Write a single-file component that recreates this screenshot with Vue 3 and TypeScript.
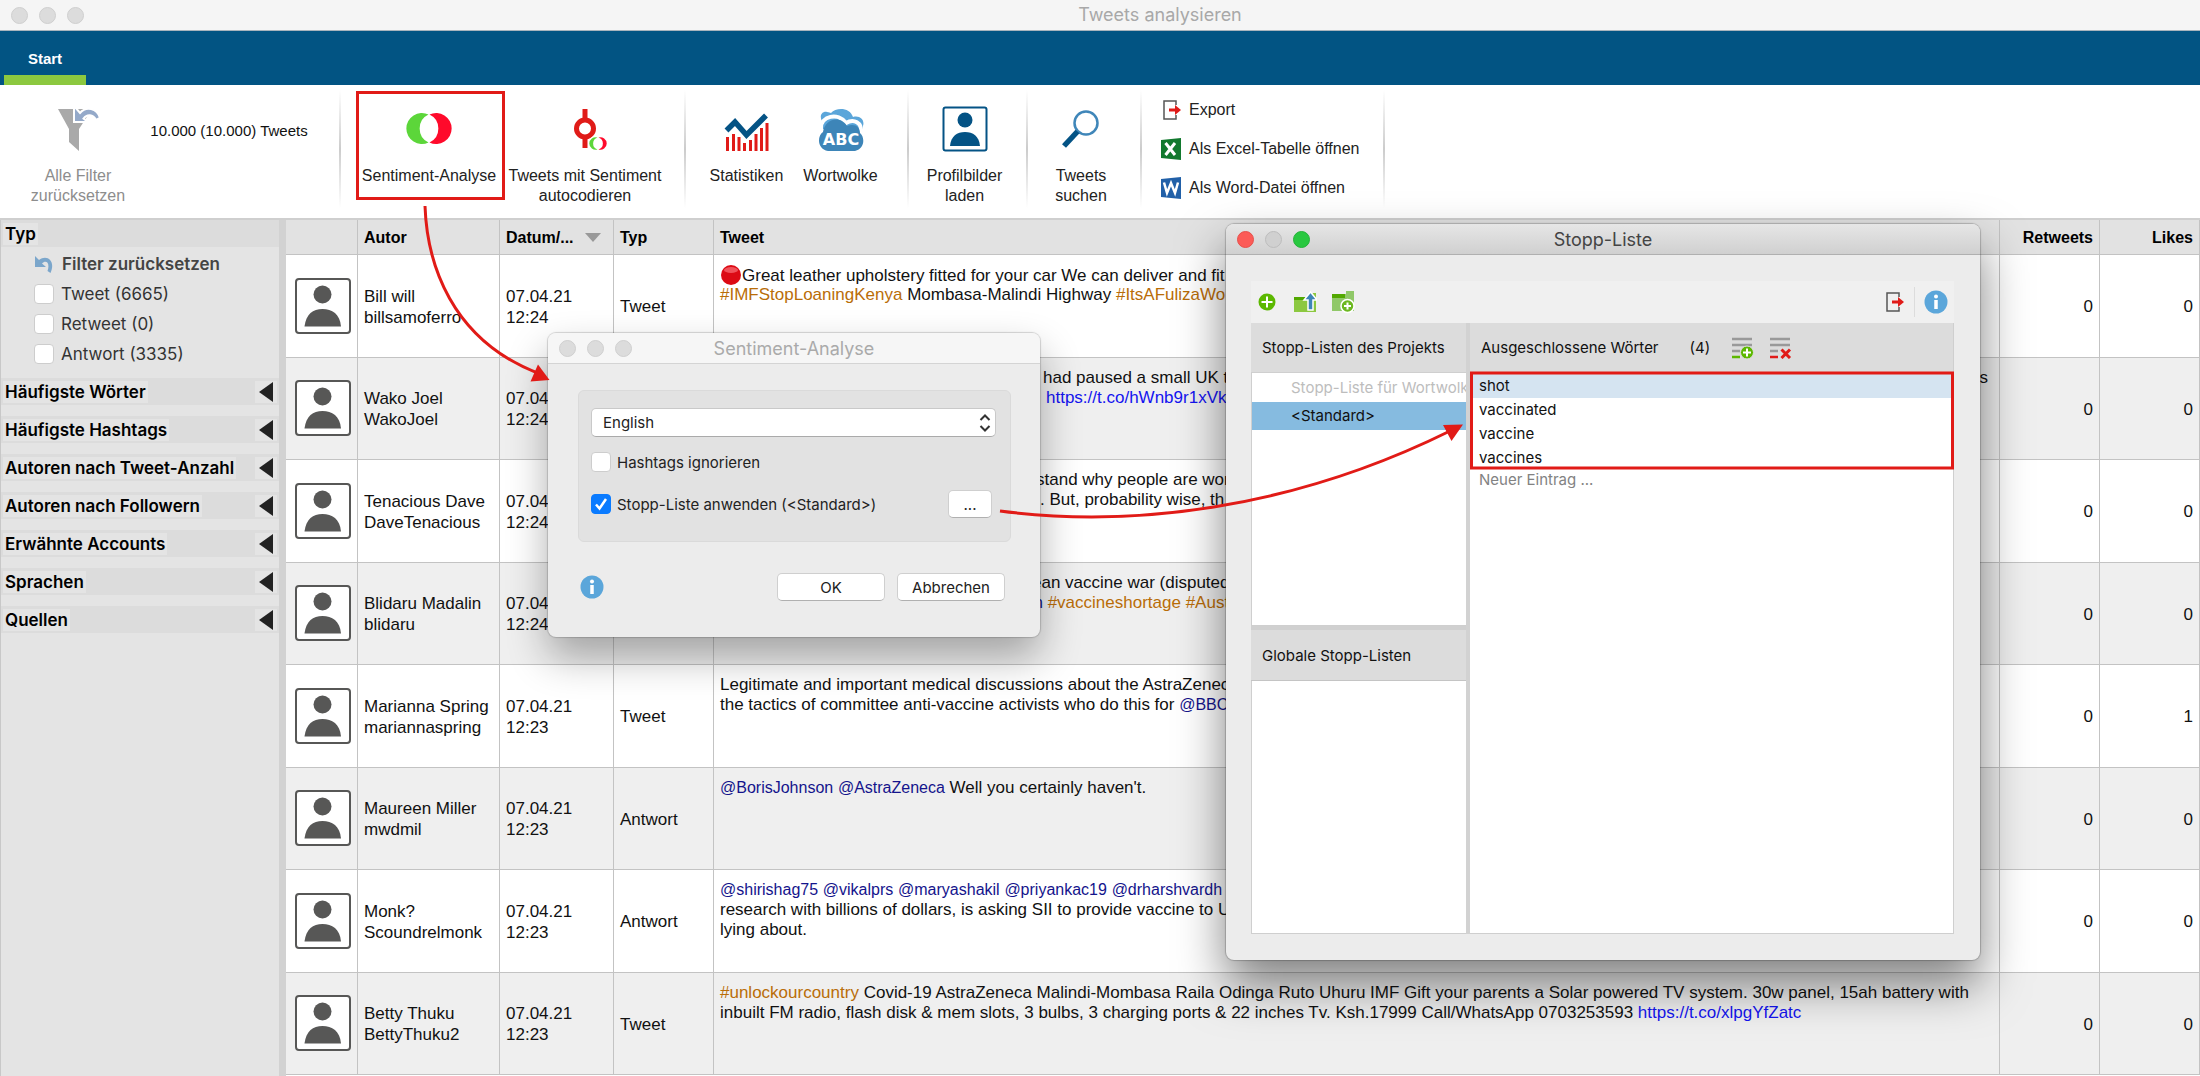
<script setup lang="ts">
import { ref } from 'vue'

type Kind = 'text' | 'hash' | 'mention' | 'link' | 'dot'
interface Part { kind: Kind; text: string }
interface Line { indent?: number; parts: Part[]; tail?: string }
interface Row { name: string; handle: string; time: string; type: string; lines: Line[]; retweets: number; likes: number }

const t = (text: string): Part => ({ kind: 'text', text })
const h = (text: string): Part => ({ kind: 'hash', text })
const m = (text: string): Part => ({ kind: 'mention', text })
const l = (text: string): Part => ({ kind: 'link', text })

const rows: Row[] = [
  { name: 'Bill will', handle: 'billsamoferro', time: '12:24', type: 'Tweet', retweets: 0, likes: 0, lines: [
    { parts: [{ kind: 'dot', text: '' }, t('Great leather upholstery fitted for your car We can deliver and fit a')] },
    { parts: [h('#IMFStopLoaningKenya'), t(' Mombasa-Malindi Highway '), h('#ItsAFulizaWor')] } ] },
  { name: 'Wako Joel', handle: 'WakoJoel', time: '12:24', type: 'Tweet', retweets: 0, likes: 0, lines: [
    { indent: 323, parts: [t('had paused a small UK t')], tail: 's' },
    { indent: 326, parts: [l('https://t.co/hWnb9r1xVk')] } ] },
  { name: 'Tenacious Dave', handle: 'DaveTenacious', time: '12:24', type: 'Tweet', retweets: 0, likes: 0, lines: [
    { indent: 316, parts: [t('stand why people are wor')] },
    { indent: 320, parts: [t('. But, probability wise, th')] } ] },
  { name: 'Blidaru Madalin', handle: 'blidaru', time: '12:24', type: 'Tweet', retweets: 0, likes: 0, lines: [
    { indent: 312, parts: [t('ean vaccine war (disputed')] },
    { indent: 314, parts: [m('n'), t(' '), h('#vaccineshortage'), t(' '), h('#Aust')] } ] },
  { name: 'Marianna Spring', handle: 'mariannaspring', time: '12:23', type: 'Tweet', retweets: 0, likes: 1, lines: [
    { parts: [t('Legitimate and important medical discussions about the AstraZenec')] },
    { parts: [t('the tactics of committee anti-vaccine activists who do this for '), m('@BBC')] } ] },
  { name: 'Maureen Miller', handle: 'mwdmil', time: '12:23', type: 'Antwort', retweets: 0, likes: 0, lines: [
    { parts: [m('@BorisJohnson'), t(' '), m('@AstraZeneca'), t(" Well you certainly haven't.")] } ] },
  { name: 'Monk?', handle: 'Scoundrelmonk', time: '12:23', type: 'Antwort', retweets: 0, likes: 0, lines: [
    { parts: [m('@shirishag75'), t(' '), m('@vikalprs'), t(' '), m('@maryashakil'), t(' '), m('@priyankac19'), t(' '), m('@drharshvardh')] },
    { parts: [t('research with billions of dollars, is asking SII to provide vaccine to U')] },
    { parts: [t('lying about.')] } ] },
  { name: 'Betty Thuku', handle: 'BettyThuku2', time: '12:23', type: 'Tweet', retweets: 0, likes: 0, lines: [
    { parts: [h('#unlockourcountry'), t(' Covid-19 AstraZeneca Malindi-Mombasa Raila Odinga Ruto Uhuru IMF Gift your parents a Solar powered TV system. 30w panel, 15ah battery with')] },
    { parts: [t('inbuilt FM radio, flash disk & mem slots, 3 bulbs, 3 charging ports & 22 inches Tv. Ksh.17999 Call/WhatsApp 0703253593 '), l('https://t.co/xlpgYfZatc')] } ] },
]

const typeFilters = ref([
  { label: 'Tweet (6665)', on: false },
  { label: 'Retweet (0)', on: false },
  { label: 'Antwort (3335)', on: false },
])
const sections = ['Häufigste Wörter', 'Häufigste Hashtags', 'Autoren nach Tweet-Anzahl', 'Autoren nach Followern', 'Erwähnte Accounts', 'Sprachen', 'Quellen']
const words = ['shot', 'vaccinated', 'vaccine', 'vaccines']
const selectedWord = ref('shot')
const language = ref('English')
const ignoreHashtags = ref(false)
const useStopList = ref(true)
const newWord = ref('')
</script>

<template>
  <div class="app">
    <header class="titlebar">
      <span class="lights"><i></i><i></i><i></i></span>
      <h1>Tweets analysieren</h1>
    </header>
    <nav class="tabs"><a href="#" class="tab">Start</a></nav>

    <div class="ribbon">
      <div class="group g-filter">
        <button class="tool dim">
          <svg width="46" height="46" viewBox="0 0 46 46"><path d="M3 3H37L24 23V45L14 36V23Z" fill="#a9a9a9"/><path d="M19 1V16H33L28.500 12.500C32 8 38 8 41 14L45 12C42 2 31 0 25 7L20 1Z" fill="#94a9c9" stroke="#fff" stroke-width="2"/></svg>
          <span>Alle Filter<br>zurücksetzen</span>
        </button>
        <span class="count">10.000 (10.000) Tweets</span>
      </div>
      <div class="group g-senti">
        <button class="tool w-a">
          <svg width="46" height="46" viewBox="0 0 46 46"><path d="M22.500 8.500A15.500 15.500 0 1 0 22.500 36.500A15.500 15.500 0 0 1 22.500 8.500Z" fill="#5cd63a"/><path d="M23.500 8.500A15.500 15.500 0 1 1 23.500 36.500A15.500 15.500 0 0 0 23.500 8.500Z" fill="#ff0a2b"/></svg>
          <span>Sentiment-Analyse</span>
        </button>
        <button class="tool w-b">
          <svg width="46" height="46" viewBox="0 0 46 46"><path d="M23 3V13M23 32V42" stroke="#e01b18" stroke-width="5"/><circle cx="23" cy="22.500" r="8.500" fill="none" stroke="#e01b18" stroke-width="5"/><circle cx="33.500" cy="37.500" r="7.500" fill="#fff"/><path d="M35.500 31.500A6.300 6.300 0 1 0 35.500 43.500A6.300 6.300 0 0 1 35.500 31.500Z" fill="#5cd63a"/><path d="M36.500 31.500A6.300 6.300 0 1 1 36.500 43.500A6.300 6.300 0 0 0 36.500 31.500Z" fill="#ff0a2b"/></svg>
          <span>Tweets mit Sentiment<br>autocodieren</span>
        </button>
      </div>
      <div class="group g-stat">
        <button class="tool w-c">
          <svg width="46" height="46" viewBox="0 0 46 46"><path d="M3.500 31V45M9.500 28V45M15 31V45M20.500 37V45M26.500 34V45M32 28V45M37.500 22V45M43 17V45" stroke="#e01b18" stroke-width="3"/><path d="M2 24L11 15L22 29L42 8" fill="none" stroke="#fff" stroke-width="9"/><path d="M2.500 24.500L11 16L22.500 29L42 9.500" fill="none" stroke="#045385" stroke-width="5.500"/></svg>
          <span>Statistiken</span>
        </button>
        <button class="tool w-c">
          <svg width="46" height="46" viewBox="0 0 46 46"><path d="M4 15C1 10 4 5 9 6C11 6 12 7 13 7C18 1 32 1 35 11C42 9 47 14 45 20V23H5V16Z" fill="#5ba6da"/><path d="M3 22C3 10 20 6 28 17C36 12 44 17 43 26" fill="none" stroke="#fff" stroke-width="4"/><path d="M5 26C7 13 22 9 29 20C37 17 42 21 42 27C47 31 47 43 37 45H10C-1 43 -1 30 5 26Z" fill="#3d85b8"/><text x="23" y="39" text-anchor="middle" class="abc">ABC</text></svg>
          <span>Wortwolke</span>
        </button>
      </div>
      <div class="group g-prof">
        <button class="tool w-d">
          <svg width="46" height="46" viewBox="0 0 46 46"><rect x="1.500" y="1.500" width="43" height="43" rx="2" fill="#fff" stroke="#045385" stroke-width="2"/><circle cx="23" cy="14" r="7.500" fill="#045385"/><path d="M8 40C9 30 15 26 23 26S37 30 38 40Z" fill="#045385"/></svg>
          <span>Profilbilder<br>laden</span>
        </button>
      </div>
      <div class="group g-find">
        <button class="tool w-d">
          <svg width="46" height="46" viewBox="0 0 46 46"><circle cx="28" cy="17" r="11.500" fill="none" stroke="#3f86b9" stroke-width="2.500"/><path d="M19.500 25.500L6 40" stroke="#045385" stroke-width="5.500"/></svg>
          <span>Tweets<br>suchen</span>
        </button>
      </div>
      <div class="group g-files">
        <button class="file"><svg width="20" height="22" viewBox="0 0 20 22"><path d="M15 6V2H3V20H15V16" fill="none" stroke="#555" stroke-width="1.500"/><path d="M8 11H15" stroke="#e01b18" stroke-width="3"/><path d="M14 6L20 11L14 16Z" fill="#e01b18"/></svg>Export</button>
        <button class="file"><svg width="20" height="22" viewBox="0 0 20 22"><path d="M0 2L20 0V22L0 20Z" fill="#12792e"/><path d="M4.500 5L14 17M14 5L4.500 17" stroke="#fff" stroke-width="3"/></svg>Als Excel-Tabelle öffnen</button>
        <button class="file"><svg width="20" height="22" viewBox="0 0 20 22"><path d="M0 2L20 0V22L0 20Z" fill="#2160a8"/><path d="M3 5.500L6 16L10 6L14 16L17 5.500" fill="none" stroke="#fff" stroke-width="2.500"/></svg>Als Word-Datei öffnen</button>
      </div>
    </div>

    <main class="body">
      <aside class="sidebar">
        <h2 class="sec first"><span>Typ</span></h2>
        <div class="filters">
          <button class="reset"><svg width="20" height="18" viewBox="0 0 20 18"><path d="M1 1V12H12L8 8.500C11.500 5 16.500 7 13.500 16L16.500 18C22 6 13 -1 5 5Z" fill="#7ba6cb"/></svg>Filter zurücksetzen</button>
          <label v-for="f in typeFilters" :key="f.label"><input v-model="f.on" type="checkbox" class="box">{{ f.label }}</label>
        </div>
        <h2 v-for="s in sections" :key="s" class="sec"><span>{{ s }}</span><button :aria-label="s"><svg width="14" height="20" viewBox="0 0 14 20"><path d="M14 0V20L0 10Z" fill="#222"/></svg></button></h2>
      </aside>

      <table class="grid">
        <colgroup><col class="c-pic"><col class="c-name"><col class="c-date"><col class="c-num"><col><col class="c-num"><col class="c-num"></colgroup>
        <thead>
          <tr><th></th><th>Autor</th><th><span class="sort">Datum/...<svg width="16" height="9" viewBox="0 0 16 9"><path d="M0 0H16L8 9Z" fill="#999"/></svg></span></th><th>Typ</th><th>Tweet</th><th class="num">Retweets</th><th class="num">Likes</th></tr>
        </thead>
        <tbody>
          <tr v-for="r in rows" :key="r.handle">
            <td class="pic"><svg width="56" height="56" viewBox="0 0 56 56"><rect x="1" y="1" width="54" height="54" rx="3" fill="#fff" stroke="#575756" stroke-width="2"/><circle cx="27.500" cy="16.500" r="9" fill="#575756"/><path d="M9.500 48.500C11 36 18 31 27.500 31S45 36 46 48.500Z" fill="#575756"/></svg></td>
            <td>{{ r.name }}<br>{{ r.handle }}</td>
            <td>07.04.21<br>{{ r.time }}</td>
            <td>{{ r.type }}</td>
            <td class="tweet">
              <div v-for="(ln, i) in r.lines" :key="i" class="line" :style="{ paddingLeft: (ln.indent ?? 0) + 'px' }">
                <span><template v-for="(p, k) in ln.parts" :key="k"><svg v-if="p.kind === 'dot'" class="dot" width="22" height="20" viewBox="0 0 22 20"><circle cx="11" cy="10" r="10" fill="#dc0a14"/><ellipse cx="11" cy="5" rx="7" ry="3" fill="#f0525a"/></svg><a v-else-if="p.kind !== 'text'" href="#" :class="p.kind">{{ p.text }}</a><template v-else>{{ p.text }}</template></template></span>
                <span v-if="ln.tail">{{ ln.tail }}</span>
              </div>
            </td>
            <td class="num">{{ r.retweets }}</td>
            <td class="num">{{ r.likes }}</td>
          </tr>
        </tbody>
      </table>
    </main>

    <section class="win senti" aria-label="Sentiment-Analyse">
      <header><span class="lights"><i></i><i></i><i></i></span><h2>Sentiment-Analyse</h2></header>
      <div class="panel">
        <div class="selectwrap">
          <select v-model="language" aria-label="Sprache"><option>English</option></select>
          <svg width="12" height="18" viewBox="0 0 12 18"><path d="M1.500 6L6 1.500L10.500 6M1.500 12L6 16.500L10.500 12" fill="none" stroke="#333" stroke-width="2"/></svg>
        </div>
        <div class="opt"><label><input v-model="ignoreHashtags" type="checkbox" class="box">Hashtags ignorieren</label></div>
        <div class="opt"><label><input v-model="useStopList" type="checkbox" class="box">Stopp-Liste anwenden (&lt;Standard&gt;)</label><button class="push more">...</button></div>
      </div>
      <footer>
        <button class="info" aria-label="Info"><svg width="24" height="24" viewBox="0 0 24 24"><circle cx="12" cy="12" r="11.500" fill="#5ba6da"/><circle cx="12" cy="6.500" r="2" fill="#fff"/><path d="M12 10V19" stroke="#fff" stroke-width="3.500"/></svg></button>
        <button class="push">OK</button>
        <button class="push">Abbrechen</button>
      </footer>
    </section>

    <section class="win stop" aria-label="Stopp-Liste">
      <header><span class="lights active"><i></i><i></i><i></i></span><h2>Stopp-Liste</h2></header>
      <div class="stopbody">
        <div class="bar">
          <button aria-label="Neue Stopp-Liste"><svg width="24" height="24" viewBox="0 0 24 24"><circle cx="12" cy="12" r="8.500" fill="#5cb800"/><path d="M12 6.500V17.500M6.500 12H17.500" stroke="#fff" stroke-width="2"/></svg></button>
          <button aria-label="Importieren"><svg width="24" height="24" viewBox="0 0 24 24"><path d="M1 7H15L20 3H23V22H1Z" fill="#8cc840"/><path d="M1 7H12V10H1Z" fill="#52a800"/><path d="M17.500 2L24 10H20V20H15V10H11Z" fill="#3d85b8" stroke="#fff" stroke-width="1.500"/></svg></button>
          <button aria-label="Ordner hinzufügen"><svg width="24" height="24" viewBox="0 0 24 24"><path d="M1 4H15V1H23V21H1Z" fill="#90c868"/><path d="M1 4H14V8H1Z" fill="#52a800"/><circle cx="16.500" cy="16" r="6.500" fill="#6cb820" stroke="#fff" stroke-width="1.500"/><path d="M16.500 12.500V19.500M13 16H20" stroke="#fff" stroke-width="2"/></svg></button>
          <span class="grow"></span>
          <button aria-label="Exportieren"><svg width="20" height="22" viewBox="0 0 20 22"><path d="M14 6V2H2V20H14V16" fill="none" stroke="#555" stroke-width="1.500"/><path d="M7 11H14" stroke="#e01b18" stroke-width="3"/><path d="M13 6L19 11L13 16Z" fill="#e01b18"/></svg></button>
          <span class="sep"></span>
          <button aria-label="Info"><svg width="24" height="24" viewBox="0 0 24 24"><circle cx="12" cy="12" r="11.500" fill="#5ba6da"/><circle cx="12" cy="6.500" r="2" fill="#fff"/><path d="M12 10V19" stroke="#fff" stroke-width="3.500"/></svg></button>
        </div>
        <div class="cols">
          <div class="left">
            <h3>Stopp-Listen des Projekts</h3>
            <ul class="lists">
              <li class="off">Stopp-Liste für Wortwolke</li>
              <li class="sel">&lt;Standard&gt;</li>
            </ul>
            <h3 class="global">Globale Stopp-Listen</h3>
            <div class="empty"></div>
          </div>
          <div class="right">
            <h3>Ausgeschlossene Wörter<span class="n">(4)</span>
              <button aria-label="Wort hinzufügen"><svg width="22" height="22" viewBox="0 0 22 22"><path d="M0 2H20M0 8H20M0 14H8" stroke="#999" stroke-width="2.500"/><path d="M0 20H8" stroke="#5cb800" stroke-width="2.500"/><circle cx="15" cy="15.500" r="6.500" fill="#5cb800" stroke="#ddd"/><path d="M15 11.500V19.500M11 15.500H19" stroke="#fff" stroke-width="2"/></svg></button>
              <button aria-label="Wort löschen"><svg width="22" height="22" viewBox="0 0 22 22"><path d="M0 2H20M0 8H20M0 14H8" stroke="#999" stroke-width="2.500"/><path d="M0 20H8" stroke="#e01b18" stroke-width="2.500"/><path d="M11.500 12.500L20 21M20 12.500L11.500 21" stroke="#e01b18" stroke-width="3"/></svg></button>
            </h3>
            <ul class="words">
              <li v-for="w in words" :key="w" :class="{ sel: w === selectedWord }" @click="selectedWord = w">{{ w }}</li>
            </ul>
            <input v-model="newWord" class="new" type="text" placeholder="Neuer Eintrag ..." aria-label="Neuer Eintrag">
          </div>
        </div>
      </div>
    </section>

    <svg class="marks" width="2200" height="1076" viewBox="0 0 2200 1076" fill="none" stroke="#e11b17" stroke-width="3">
      <rect x="357.500" y="92.500" width="146" height="106"/>
      <rect x="1471.500" y="373" width="481" height="95"/>
      <path d="M425 206C427 262 450 340 540 374"/>
      <path d="M549.500 380L530.500 381.500L538 364.500Z" fill="#e11b17" stroke="none"/>
      <path d="M1000 511C1130 528 1290 510 1450 431"/>
      <path d="M1463 424.500L1443 425L1451.500 441Z" fill="#e11b17" stroke="none"/>
    </svg>
  </div>
</template>

<style>
body { margin: 0; }
</style>

<style scoped>
.app { position: relative; min-height: 100vh; display: flex; flex-direction: column; overflow: hidden; background: #fff; color: #111; font-family: "Liberation Sans", Arial, sans-serif; font-size: 16px; }
.app *, .app *::before { box-sizing: border-box; }
h1, h2, h3, ul { margin: 0; padding: 0; list-style: none; font-weight: 400; }
button { border: 0; background: none; padding: 0; margin: 0; font: inherit; color: inherit; }
svg { display: block; }
a { color: inherit; text-decoration: none; }

.titlebar { position: relative; height: 31px; display: flex; align-items: center; background: #f5f5f5; border-bottom: 1px solid #a9b4bd; }
.titlebar h1 { flex: 1; text-align: center; margin-left: 36px; font: 18px/20px Inter, sans-serif; color: #a8a8a8; }
.titlebar .lights { margin-left: 11px; }
.lights { display: flex; gap: 11px; }
.lights i { width: 17px; height: 17px; border-radius: 50%; background: #dcdcdc; border: 1px solid #cfcfcf; }
.lights.active i:nth-child(1) { background: #fc5b57; border-color: #e5504b; }
.lights.active i:nth-child(2) { background: #d0d0d0; border-color: #bcbcbc; }
.lights.active i:nth-child(3) { background: #29c840; border-color: #24b338; }

.tabs { height: 54px; background: #025483; display: flex; padding-left: 4px; }
.tab { display: flex; align-items: center; justify-content: center; width: 82px; border-bottom: 10px solid #8cc83f; padding-top: 10px; color: #fff; font-weight: 700; font-size: 15px; }

.ribbon { display: flex; height: 133px; font-size: 16px; line-height: 20px; color: #222; }
.group { position: relative; display: flex; align-items: flex-start; justify-content: center; }
.group::after { content: ""; position: absolute; right: 0; top: 5px; bottom: 10px; width: 2px; background: linear-gradient(#fff, #ccc 50%, #fff); }
.g-filter { width: 341px; justify-content: flex-start; }
.g-filter .tool { width: 156px; }
.g-senti { width: 345px; justify-content: flex-start; padding-left: 13px; }
.g-stat { width: 223px; padding-right: 8px; }
.g-prof { width: 119px; padding-right: 8px; }
.g-find { width: 114px; padding-right: 8px; }
.g-files { width: 243px; flex-direction: column; align-items: flex-start; justify-content: flex-start; padding: 14px 0 0 19px; gap: 17px; }
.tool { display: flex; flex-direction: column; align-items: center; gap: 14px; padding-top: 21px; text-align: center; white-space: nowrap; }
.dim { color: #8d8d8d; }
.w-a { width: 150px; }
.w-b { width: 162px; }
.w-c { width: 94px; }
.w-d { width: 106px; }
.count { width: 146px; display: flex; justify-content: center; white-space: nowrap; padding-top: 36px; font-size: 15px; color: #111; }
.file { display: flex; align-items: center; gap: 8px; height: 22px; white-space: nowrap; }
.abc { font: 700 16px "DejaVu Sans", sans-serif; fill: #fff; }

.body { flex: 1; display: flex; border-top: 2px solid #cfcfcf; }
.sidebar { width: 286px; flex: none; background: #e4e4e4; border-right: 7px solid #d2d2d2; border-left: 1px solid #c8c8c8; font-family: Inter, sans-serif; font-size: 17px; color: #333; }
.sec { display: flex; align-items: center; justify-content: space-between; height: 27px; margin-bottom: 11px; padding: 0 2px; background: #dcdcdc; font-size: 17px; font-weight: 600; color: #000; }
.sec span { background: #e4e4e4; padding: 0 2px; line-height: 22px; }
.sec button { background: #e4e4e4; padding: 1px 4px; }
.sec.first { margin: 0; }
.filters { display: flex; flex-direction: column; height: 131px; padding: 3px 0 0 33px; }
.reset { display: flex; align-items: center; gap: 8px; height: 28px; font-weight: 600; color: #444; }
.filters label { display: flex; align-items: center; gap: 7px; height: 30px; padding-top: 2px; }
.box { appearance: none; width: 20px; height: 20px; margin: 0; flex: none; border-radius: 4px; background: #fff; border: 1px solid #cdcdcd; }
.box:checked { border-color: #0a7bff; background: #0a7bff url("data:image/svg+xml,%3Csvg xmlns='http://www.w3.org/2000/svg' viewBox='0 0 18 18'%3E%3Cpath d='M4 9.500L7.500 13.500L14 4' fill='none' stroke='white' stroke-width='2.500'/%3E%3C/svg%3E") center / 18px no-repeat; }

.grid { flex: 1; table-layout: fixed; border-collapse: separate; border-spacing: 0; font-size: 17px; line-height: 21px; margin-bottom: 1px; }
.c-pic { width: 72px; } .c-name { width: 142px; } .c-date { width: 114px; } .c-num { width: 100px; }
.grid th, .grid td { border-right: 1px solid #c3c3c3; border-bottom: 1px solid #c3c3c3; padding: 2px 6px 0; text-align: left; vertical-align: middle; }
.grid th { height: 35px; padding-top: 0; background: #e2e2e2; font-size: 16px; color: #000; }
.grid tbody tr { height: 102px; }
.grid tbody tr:nth-child(even) { background: #efefef; }
.grid .pic { padding: 0 0 0 9px; }
.grid .num { text-align: right; }
.sort { display: flex; align-items: center; justify-content: space-between; padding-right: 6px; }
.grid .tweet { vertical-align: top; padding: 10px 11px 0 6px; line-height: 20px; }
.line { display: flex; justify-content: space-between; height: 20px; white-space: pre; }
.dot { display: inline-block; vertical-align: -4px; }
.hash { color: #b96d08; }
.mention { color: #14148c; font-size: 16px; }
.link { color: #1414f0; }

.win { position: absolute; border-radius: 8px; background: #ececec; font-family: Inter, sans-serif; font-size: 15px; color: #222; display: flex; flex-direction: column; overflow: hidden; }
.win header { position: relative; display: flex; align-items: center; height: 31px; padding-left: 11px; flex: none; }
.win header h2 { position: absolute; inset: 0; text-align: center; font-size: 18px; line-height: 32px; }
.senti { left: 548px; top: 333px; width: 492px; box-shadow: 0 0 1px 1px rgba(0, 0, 0, .16), 0 20px 40px rgba(0, 0, 0, .32); }
.senti header { background: #f6f6f6; border-bottom: 1px solid #d4d4d4; }
.senti header h2 { color: #aaa; }
.panel { margin: 26px 29px 0 30px; padding: 17px 14px 0 12px; height: 152px; border: 1px solid #dadada; border-radius: 6px; background: #e2e2e2; }
.selectwrap { position: relative; margin-bottom: 4px; }
.selectwrap select { appearance: none; width: 100%; height: 29px; border: 1px solid #c9c9c9; border-bottom-color: #aaa; border-radius: 5px; background: #fff; padding: 0 11px; font: inherit; color: #222; }
.selectwrap svg { position: absolute; right: 5px; top: 6px; }
.opt { display: flex; align-items: center; justify-content: space-between; height: 42px; padding-right: 4px; }
.opt label { display: flex; align-items: center; gap: 6px; }
.push { height: 28px; width: 108px; border-radius: 5px; background: #fff; border: 1px solid #cfcfcf; border-bottom-color: #b0b0b0; }
.more { width: 44px; }
.senti footer { display: flex; align-items: center; gap: 12px; padding: 31px 35px 36px 32px; }
.info { margin-right: auto; }

.stop { left: 1226px; top: 224px; width: 754px; box-shadow: 0 0 1px 1px rgba(0, 0, 0, .2), 0 24px 48px rgba(0, 0, 0, .5); }
.stop header { background: linear-gradient(#e6e6e6, #d0d0d0); border-bottom: 1px solid #b0b0b0; }
.stop header h2 { color: #444; }
.stopbody { margin: 26px 26px 26px 25px; }
.bar { display: flex; align-items: center; height: 42px; padding: 0 6px 0 4px; gap: 14px; background: #f0f0f0; }
.grow { flex: 1; }
.sep { width: 1px; height: 30px; background: #dcdcdc; margin: 0 -5px; }
.cols { display: flex; height: 611px; }
.left { width: 219px; flex: none; display: flex; flex-direction: column; border-right: 4px solid #d2d2d2; }
.left h3, .right h3 { height: 49px; flex: none; display: flex; align-items: center; padding: 0 11px; background: #dcdcdc; white-space: nowrap; font-size: 15px; color: #111; }
.left h3.global { height: 55px; border-top: 4px solid #d0d0d0; border-bottom: 1px solid #c4c4c4; }
.lists { flex: none; height: 254px; padding-top: 1px; background: #fff; border: 1px solid #cfcfcf; border-right: 0; }
.lists li { height: 28px; line-height: 28px; padding-left: 39px; overflow: hidden; white-space: nowrap; }
.lists .off { color: #bdbdbd; }
.lists .sel { background: #86bbe0; color: #111; }
.empty { flex: 1; background: #fff; border: 1px solid #cfcfcf; border-width: 0 0 1px 1px; }
.right { flex: 1; background: #fff; border: 1px solid #cfcfcf; border-width: 0 1px 1px 0; color: #111; }
.n { margin: 0 22px 0 31px; }
.right h3 button + button { margin-left: 16px; }
.words { padding-top: 2px; }
.words li { height: 24px; line-height: 24px; padding-left: 9px; }
.words .sel { background: #d5e4f1; }
.new { display: block; width: 100%; height: 18px; border: 0; padding: 0 9px; background: none; font: inherit; }
.new::placeholder { color: #828282; opacity: 1; }
.marks { position: absolute; left: 0; top: 0; pointer-events: none; }
</style>
